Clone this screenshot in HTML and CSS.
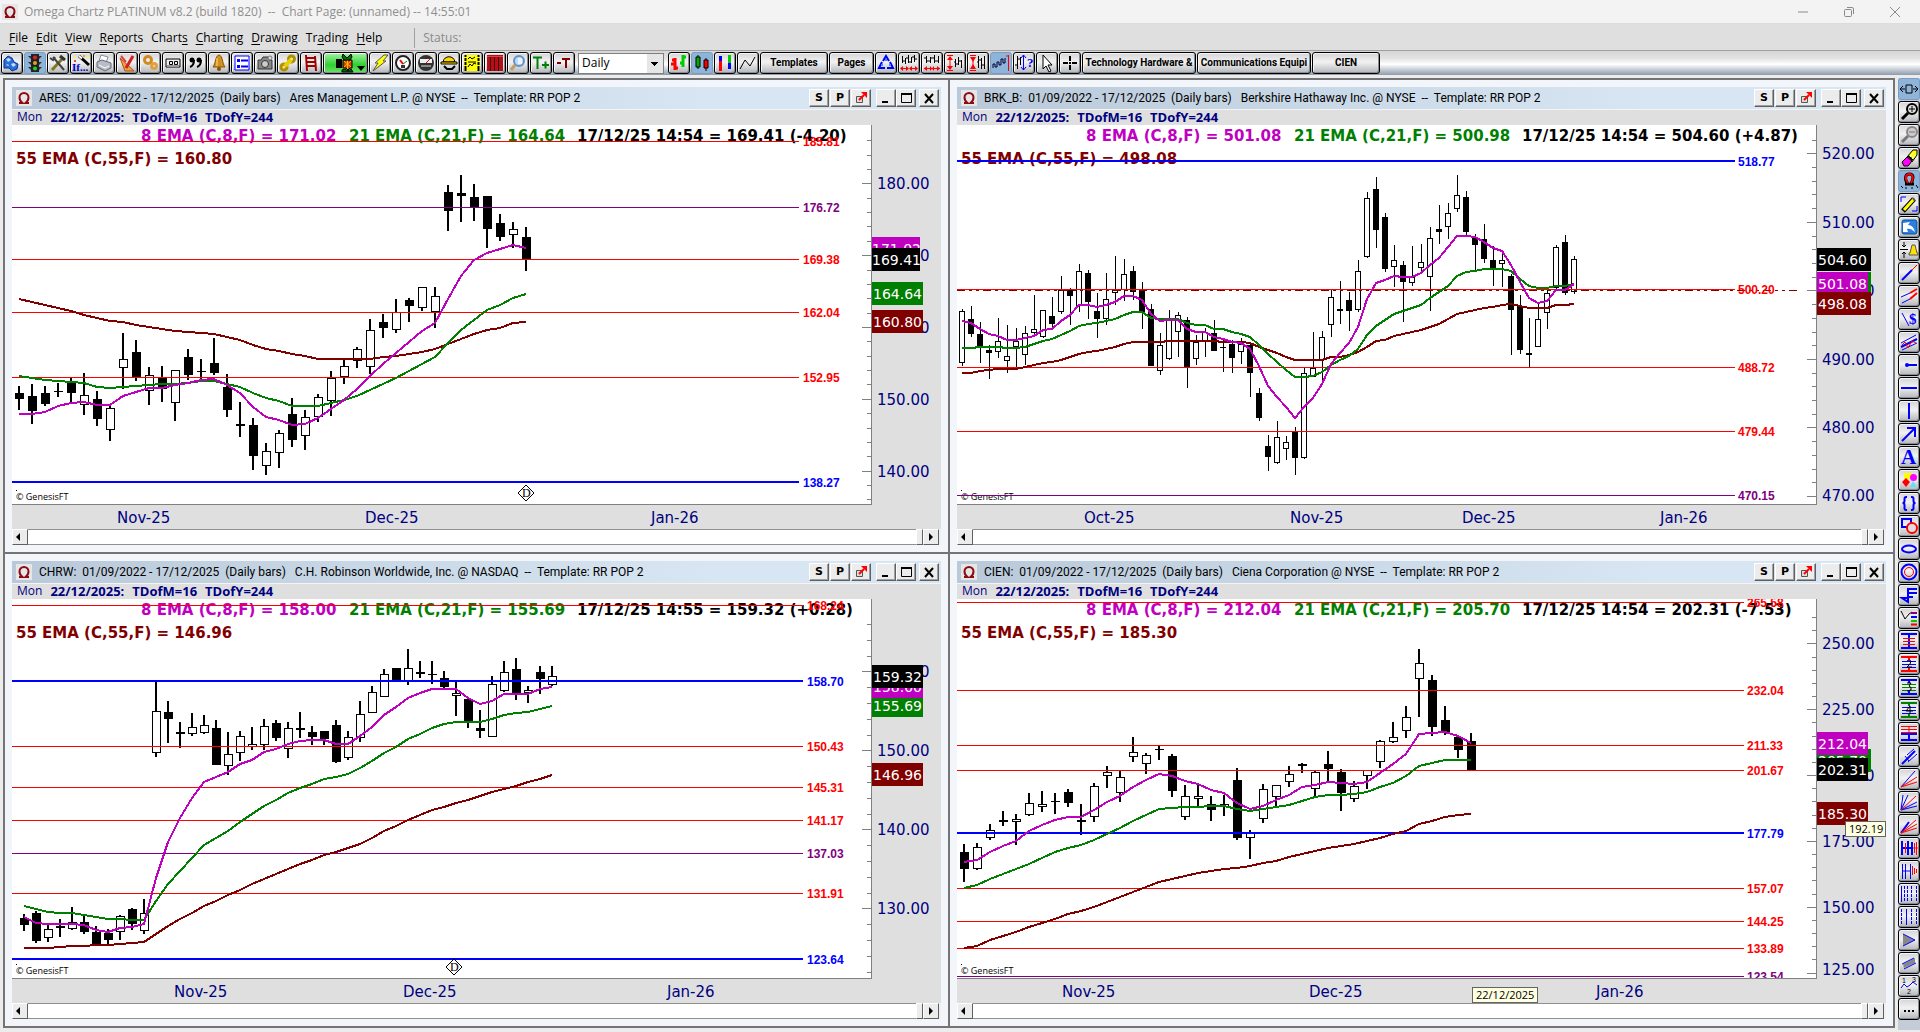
FILE: index.html
```html
<!DOCTYPE html>
<html lang="en">
<head>
<meta charset="utf-8">
<title>Omega Chartz PLATINUM</title>
<link rel="stylesheet" href="styles.css">
</head>
<body>
<header class="titlebar">
  <svg class="omega" viewBox="0 0 16 16" aria-hidden="true"><path d="M3 13h3.500C4.500 11.500 3.500 9.500 3.500 7.500a4.500 4.500 0 0 1 9 0c0 2-1 4-3 5.500H13"/></svg>
  <h1 class="app-title">Omega Chartz PLATINUM v8.2 (build 1820)&nbsp; --&nbsp; Chart Page: (unnamed) -- 14:55:01</h1>
  <div class="win-controls">
    <button type="button" aria-label="Minimize"><svg viewBox="0 0 12 12"><path d="M1 6h10"/></svg></button>
    <button type="button" aria-label="Restore"><svg viewBox="0 0 12 12"><rect x="1.500" y="3.500" width="7" height="7" rx="1"/><path d="M4 1.500h5a1.500 1.500 0 0 1 1.500 1.500v5"/></svg></button>
    <button type="button" aria-label="Close"><svg viewBox="0 0 12 12"><path d="M1 1l10 10M11 1L1 11"/></svg></button>
  </div>
</header>
<nav class="menubar">
  <a href="#"><u>F</u>ile</a><a href="#"><u>E</u>dit</a><a href="#"><u>V</u>iew</a><a href="#"><u>R</u>eports</a><a href="#">Chart<u>s</u></a><a href="#"><u>C</u>harting</a><a href="#"><u>D</u>rawing</a><a href="#">Tr<u>a</u>ding</a><a href="#"><u>H</u>elp</a>
  <span class="status">Status:</span>
</nav>
<div class="toolbar" role="toolbar" aria-label="Main">
  <div class="tools" data-tools="main"></div>
  <select class="period" aria-label="Bar period"><option>Daily</option><option>Weekly</option><option>Monthly</option></select>
  <div class="tools" data-tools="style"></div>
  <button type="button" class="tool label templates">Templates</button>
  <button type="button" class="tool label pages">Pages</button>
  <div class="tools" data-tools="scale"></div>
  <button type="button" class="tool label sector">Technology Hardware &amp;</button>
  <button type="button" class="tool label sector">Communications Equipi</button>
  <button type="button" class="tool label symbol">CIEN</button>
</div>
<div class="workspace">
  <main class="mdi">
    <section class="pane" data-chart="ares" data-title="ARES:&nbsp; 01/09/2022 - 17/12/2025&nbsp; (Daily bars)&nbsp;&nbsp; Ares Management L.P. @ NYSE&nbsp; --&nbsp; Template: RR POP 2"></section>
    <section class="pane" data-chart="brk" data-title="BRK_B:&nbsp; 01/09/2022 - 17/12/2025&nbsp; (Daily bars)&nbsp;&nbsp; Berkshire Hathaway Inc. @ NYSE&nbsp; --&nbsp; Template: RR POP 2"></section>
    <section class="pane" data-chart="chrw" data-title="CHRW:&nbsp; 01/09/2022 - 17/12/2025&nbsp; (Daily bars)&nbsp;&nbsp; C.H. Robinson Worldwide, Inc. @ NASDAQ&nbsp; --&nbsp; Template: RR POP 2"></section>
    <section class="pane" data-chart="cien" data-title="CIEN:&nbsp; 01/09/2022 - 17/12/2025&nbsp; (Daily bars)&nbsp;&nbsp; Ciena Corporation @ NYSE&nbsp; --&nbsp; Template: RR POP 2"></section>
  </main>
  <aside class="sidebar" role="toolbar" aria-label="Drawing" data-tools="draw"></aside>
</div>
<template id="window">
  <header class="win-title">
    <svg class="omega" viewBox="0 0 16 16" aria-hidden="true"><path d="M3 13h3.500C4.500 11.500 3.500 9.500 3.500 7.500a4.500 4.500 0 0 1 9 0c0 2-1 4-3 5.500H13"/></svg>
    <h2></h2>
    <div class="group">
      <button type="button">S</button><button type="button">P</button><button type="button" aria-label="Pop out"><svg viewBox="0 0 14 14"><path d="M2.500 5.500h6v6h-6z" fill="#ddd" stroke="#555"/><path d="M5 9l5-5" stroke="#f00" stroke-width="2"/><path d="M7 1h6v6z" fill="#f00"/></svg></button>
    </div>
    <div class="group pair">
      <button type="button" aria-label="Minimize"><svg viewBox="0 0 14 14"><path d="M3 11h6" stroke="#000" stroke-width="2"/></svg></button><button type="button" aria-label="Maximize"><svg viewBox="0 0 14 14"><path d="M2.500 2.500h10v9h-10z" fill="none" stroke="#000"/><path d="M2 3h11" stroke="#000" stroke-width="2"/></svg></button>
    </div>
    <button type="button" aria-label="Close"><svg viewBox="0 0 14 14"><path d="M3 3l8 9M11 3l-8 9" stroke="#000" stroke-width="2"/></svg></button>
  </header>
  <p class="info"><span>Mon</span><b>22/12/2025:</b><b>TDofM=16</b><b>TDofY=244</b></p>
  <div class="chart"></div>
  <div class="scroll">
    <button type="button" aria-label="Scroll left"><svg viewBox="0 0 14 14"><path d="M7 3v8L3 7z"/></svg></button>
    <div class="track"></div>
    <div class="thumb"></div>
    <button type="button" aria-label="Scroll right"><svg viewBox="0 0 14 14"><path d="M5 3v8l4-4z"/></svg></button>
  </div>
</template>
<script src="script.js"></script>
</body>
</html>
```
FILE: styles.css
```css
* { box-sizing: border-box; }
body {
  margin: 0;
  min-height: 100vh;
  display: flex;
  flex-direction: column;
  background: #f0f0f0;
  color: #000;
  font: 12px/16px "Segoe UI", "Open Sans", "Noto Sans", sans-serif;
}
button, select { font: inherit; color: inherit; padding: 0; margin: 0; }
h1, h2, p { margin: 0; font-size: inherit; font-weight: 400; }
svg { display: block; }

.titlebar {
  height: 24px;
  display: flex;
  align-items: center;
  padding: 0 19px 0 2px;
  background: #f3f3f3;
  border-bottom: 1px solid #dcdcdc;
}
.omega { width: 16px; height: 16px; flex: none; background: #e6e6e6; }
.omega path { fill: none; stroke: #8b0a14; stroke-width: 2; }
.app-title { flex: 1; margin-left: 6px; color: #8f8f8f; white-space: pre; }
.win-controls { display: flex; gap: 34px; }
.win-controls button { width: 12px; height: 12px; border: 0; background: none; }
.win-controls svg { width: 12px; height: 12px; fill: none; stroke: #8a8a8a; }

.menubar {
  height: 27px;
  display: flex;
  align-items: center;
  gap: 8px;
  padding: 1px 0 0 9px;
  background: #dfdfdf;
  border-bottom: 1px solid #a0a0a0;
}
.menubar a { color: #000; text-decoration: none; }
.menubar u { text-underline-offset: 2px; }
.status { margin-left: 24px; padding-left: 8px; border-left: 1px solid #a0a0a0; color: #8a8a8a; line-height: 20px; }

.toolbar {
  height: 24px;
  display: flex;
  align-items: center;
  gap: 1px;
  padding-left: 1px;
  background: linear-gradient(#d6d6d6, #e2e2e2 30%, #fff 55%, #8c9bab);
}
.tools { display: flex; gap: 1px; }
.tool {
  flex: none;
  width: 22px;
  height: 22px;
  border: 1px solid #000;
  border-radius: 3px;
  background: linear-gradient(#d4d4d8, #f2f2f2 45%, #b4b6ba);
  box-shadow: inset 1px 1px #f4f4f4, inset -1px -1px #8a8c90;
  overflow: hidden;
}
.tool svg { width: 20px; height: 20px; }
.tool.on { background: #8fb4d9; border-color: #7a9cc0; box-shadow: none; }
.tool.go { width: 45px; background: linear-gradient(#a8f0a8, #30d030 60%, #70e070); }
.tool.go svg { width: 43px; }
.label { font: bold 10px/18px Roboto, "Liberation Sans", Arial, sans-serif; white-space: nowrap; }
.templates { width: 68px; }
.pages { width: 45px; }
.sector { width: 114px; }
.symbol { width: 68px; }
.period {
  appearance: none;
  width: 86px;
  height: 21px;
  margin: 0 3px 0 2px;
  padding-left: 3px;
  border: 1px solid #808080;
  border-radius: 0;
  background:
    linear-gradient(135deg, #000 50%, transparent 50%) right 4px top 8px / 4px 4px no-repeat,
    linear-gradient(225deg, #000 50%, transparent 50%) right 8px top 8px / 4px 4px no-repeat,
    linear-gradient(#e6e6e6, #e6e6e6) right 0 top 0 / 16px 19px no-repeat,
    #fff;
}

.workspace { flex: 1; display: flex; gap: 3px; padding: 3px 0 2px 3px; background: #ececec; }
.mdi {
  flex: 1;
  min-width: 0;
  margin-bottom: 2px;
  display: grid;
  grid-template-columns: 1fr 1fr;
  grid-template-rows: 1fr 1fr;
  gap: 2px;
  border: 2px solid #747474;
  background: #747474;
}
.pane { min-width: 0; min-height: 0; display: flex; flex-direction: column; padding: 7px; background: #f2f6fb; }
.sidebar { width: 22px; display: flex; flex-direction: column; gap: 1px; background: #c4ccd8; }

.win-title {
  height: 23px;
  display: flex;
  align-items: center;
  gap: 3px;
  padding: 0 2px 0 4px;
  background: linear-gradient(90deg, #b9c9d9, #d8e6f3 75%);
  border-bottom: 1px solid #f4f4f4;
}
.win-title h2 { flex: 1; margin-left: 4px; font-family: Roboto, "Noto Sans", sans-serif; white-space: nowrap; overflow: hidden; }
.group { display: flex; gap: 1px; }
.pair { margin-left: 2px; gap: 0; }
.win-title button {
  width: 20px;
  height: 18px;
  display: flex;
  align-items: center;
  justify-content: center;
  border: 1px solid;
  border-color: #fff #606060 #606060 #fff;
  box-shadow: inset -1px -1px #a0a0a0;
  background: #ececec;
  font: bold 11px/14px "DejaVu Sans", Verdana, sans-serif;
}
.win-title button svg { width: 14px; height: 14px; }
.info { height: 15px; display: flex; gap: 8px; padding-left: 5px; background: #dfdfdf; color: #000080; line-height: 14px; }
.info b { font-size: 13px; }

.chart { flex: 1; min-height: 0; position: relative; background: #dfdfdf; overflow: hidden; }
.chart > svg { position: absolute; inset: 0; width: 100%; height: 100%; }
.chart text { white-space: pre; }
.axis { font: 15px "Comic Sans MS", "DejaVu Sans", sans-serif; fill: #000080; }
.tag { font: 14px "Comic Sans MS", "DejaVu Sans", sans-serif; fill: #fff; }
.legend { font: bold 15px "Comic Sans MS", "DejaVu Sans", sans-serif; }
.level { font: bold 12px "Liberation Sans", Arial, sans-serif; }
.credit { font: 9px "Open Sans", "Noto Sans", sans-serif; }
.tip { font: 11px "Open Sans", "Noto Sans", sans-serif; }

.scroll { height: 16px; display: flex; padding-right: 2px; background: #f0f0f0; }
.scroll button, .thumb { width: 16px; height: 16px; border: 1px solid; border-color: #fff #606060 #606060 #fff; background: #ececec; }
.scroll .thumb { width: 7px; }
.scroll svg { width: 14px; height: 14px; }
.track { flex: 1; background: #fff; border: solid #909090; border-width: 1px 0; }
```
FILE: script.js
```js
const B = '#00f', R = '#f00', K = '#000', G = '#008000', Y = '#ff0', M = '#c000c0', N = '#800000', V = '#800080';
const line = (d, c = K, w = 1) => `<path d="${d}" fill="none" stroke="${c}" stroke-width="${w}"/>`;
const fill = (d, c = K, s = 'none') => `<path d="${d}" fill="${c}" stroke="${s}"/>`;
const dot = (x, y, r, c, s = 'none', w = 1) => `<circle cx="${x}" cy="${y}" r="${r}" fill="${c}" stroke="${s}" stroke-width="${w}"/>`;
const word = (x, y, t, c, size) => `<text x="${x}" y="${y}" fill="${c}" font-family="Liberation Serif" font-weight="bold" font-size="${size}">${t}</text>`;
const bars = 'M3.500 3v7M6.500 5v6M9.500 2v8M12.500 4v6M15.500 2v7M4 8h2M7 5h2M10 9h2M13 4h2M16 6h2';

const icons = {
  cubes: fill('M2 7l4-4 4 2 2 4 4 2-1 5-5 2-3-3-5 0z', '#2a6fd6', '#0a2f9a') + fill('M4 6l3-1 2 2-3 2zM9 11l3-1 2 2-3 2zM4 12l2-1 1 2z', '#bfe0ff'),
  signal: fill('M6 1h8v18H6z', '#222') + fill('M3 3h3v3zM14 3h3l-3 3zM3 9h3v3zM14 9h3l-3 3zM3 14h3v3zM14 14h3l-3 3z', '#333') + dot(10, 4.500, 2, '#e02020') + dot(10, 10, 2, '#e0a020') + dot(10, 15.500, 2, '#20d020'),
  tools: line('M4 17L15 5', '#807820', 3) + line('M12 3l5 4', '#333', 3) + line('M5 4l11 13', '#444', 2) + line('M2 5l3 2 2-3', '#444', 2),
  wizard: line('M8 3l10 9', '#000', 3) + line('M8 3l3 2.500', '#fff', 2) + dot(4, 4, 1, Y) + dot(13, 3, 1, '#f80') + dot(4, 8, 1, R) + dot(17, 4, 1, Y) + word(1, 18, 'If...', '#00c', 11),
  print: fill('M7 2l7 2-2 6-7-2z', '#fff', '#889') + fill('M3 9l5-2 9 3v5l-6 3-8-4z', '#b8bcc8', '#667') + line('M5 12l6 3 4-2', '#fff'),
  design: fill('M3 5l14 13H8z', '#f0a040', '#b05010') + line('M16 3l-7 12', '#d02020', 3) + line('M4 3l5 6', '#e04040', 2),
  gears: dot(8, 7, 3.500, 'none', '#d08a20', 3) + dot(14, 13, 2.500, 'none', '#e0a040', 3),
  frame: fill('M3 6h14v8H3z', '#eee', K) + line('M4 13h12', '#999', 2) + line('M6.500 8.500h3v3h-3zM11.500 8.500h3v3h-3z'),
  quotes: dot(6, 7, 2.500, K) + dot(13, 7, 2.500, K) + line('M8 7c0 4-1 6-4 7M15 7c0 4-1 6-4 7', K, 2),
  bell: fill('M10 2c4 1 3 8 6 12H4c3-4 2-11 6-12z', '#d09020', '#8a5000') + dot(10, 16, 2, '#8a5000') + line('M8 5v8', '#ffe080'),
  list: fill('M3 3h14v14H3z', '#fff', B) + fill('M5 6h3v3H5zM5 12h3v3H5z', B) + line('M9 7.500h7M9 13.500h7', B, 2),
  camera: fill('M3 7h3l2-3h5l1 3h3v9H3z', '#888', '#333') + dot(10, 11, 3.500, '#ccc', '#333') + dot(15, 5, 2, '#ddd', '#777'),
  link: dot(13.500, 6, 3, 'none', '#b09000', 3) + dot(6, 14, 3, 'none', '#b09000', 3) + line('M13 7l-6 6', '#e8d000', 4) + line('M14 5l-1 1M6 14l-1 1', '#ffe820', 2),
  ladder: line('M5 2l1 16M14 3l1 15M5 5h9M5 9h10M6 13h9', '#a00000', 2),
  cracker: fill('M12 6h6v9h-6z') + fill('M19 7h9v8h-2l-2 2-2-2h-3z', '#d04000', K) + line('M20 8l7 6M27 8l-7 6M23.500 7v9', '#ffc000') + fill('M19 1l4 4 4-4 1 3-2 3h-6l-2-3zM18 17l3-1 3 2 3-2 2 3H18z', '#007000', K) + fill('M33 13h8l-4 5z'),
  bolt: fill('M14 2h4l-5 6h3L3 18l5-8H5z', Y, '#555'),
  gauge: dot(10, 10, 7, '#fff', '#222', 2) + line('M10 11l-3-4', R, 2) + line('M10 11l4-3', G) + fill('M8 12h4v3H8z', '#333'),
  meter: dot(10, 10, 8, '#333') + fill('M4 6h12v4H4z', '#eee') + line('M10 10l4-4', R) + fill('M5 12h10v2H5z', '#888'),
  hat: fill('M4 9c1-7 11-7 12 0z', '#ffd800', K) + fill('M2 9h16v2H2z', '#ffe000', K) + line('M5 13l3 3h5l3-3', K, 2),
  film: fill('M2 2h16v16H2z', Y) + line('M3.500 2v16M16.500 2v16', K, 2) + line('M2 4.500h3M2 8.500h3M2 12.500h3M15 4.500h3M15 8.500h3M15 12.500h3', Y, 1) + line('M6 9h8M6 14l2-3 2 2 2-3 2 1M6 6l2-2 2 2 3-2'),
  curtain: fill('M2 2h16v16H2z', '#b01018') + line('M5.500 4v14M9.500 4v14M13.500 4v14', '#500') + line('M2 3.500h16', '#e04040'),
  find: dot(11, 8, 5, '#b8dcff', '#6a90c0', 2) + line('M7 12l-4 5', '#c0a060', 3) + fill('M10 5h4v6h-4z', '#e8f4ff'),
  tplus: line('M2 4.500h9M6.500 4v12', G, 2) + line('M11 12h7M14.500 8.500v7', G, 2),
  tminus: line('M3 10h4', N, 2) + line('M8 6h8M12 6v9', N, 2),
  ohlc: line('M6 5v12M3 7h3M6 15h3M2 11h4', R, 3) + line('M14 2v12M11 10h3M14 4h3', '#0c0', 3),
  candle: line('M6 2v14M14 5v13') + fill('M4 4h4v10H4z', '#0a0', K) + fill('M12 7h4v8h-4z', R, K),
  hlbar: line('M5.500 8v10', R, 3) + line('M5.500 3v5', B, 3) + line('M14.500 2v8', '#0c0', 3) + line('M14.500 10v6', B, 3),
  close: line('M2 16l5-9 5 6 5-9', K, 1),
  recycle: line('M7 8l3-5 3 5M6 9l-3 6h6M14 9l3 6h-6', B, 2) + line('M5 12h2M10 6v2M13 12h2', '#48f', 2),
  squeeze: line(bars) + line('M2 15.500h6M12 15.500h6', R) + fill('M4 13v5l-3-2.500zM7 13v5l3-2.500zM13 13v5l-3-2.500zM16 13v5l3-2.500z', R),
  expand: line('M4.500 3v7M8.500 4v6M12.500 2v8M16.500 3v7M2 5h2M5 8h3M9 5h3M13 8h3') + line('M2 15.500h16', R) + fill('M5 13v5l-3-2.500zM8 13v5l2-2.500zM12 13v5l-2-2.500zM15 13v5l3-2.500z', R),
  tall: line('M2 2.500h6M2 17.500h6M5 4v12', R) + fill('M2 7h6l-3-4zM2 13h6l-3 4z', R) + line('M10.500 6v8M13.500 4v8M16.500 7v8M9 9h2M11 11h2M14 8h2'),
  short: line('M2 2.500h6M2 17.500h6M5 4v12', R) + fill('M2 4h6l-3 5zM2 16h6l-3-5z', R) + line('M10.500 3v12M13.500 5v11M16.500 3v13M9 9h2M11 7h2M14 12h2'),
  lastbar: line('M2 15v-4h2v3h2v-5h2v3h2V6h2v4h2V5', '#003') + line('M17.500 2v16M15 3h3', R),
  what: line('M3.500 3v13M3 6h3M1 12h2M6.500 4v8', K) + line('M9.500 2v15M7 5l2.500-3L12 5M7 14l2.500 3 2.500-3', B) + word(13, 14, '?', B, 13),
  pointer: fill('M6 2v14l3-3 3 6 2-1-3-6h4z', '#fff', K),
  cross: line('M10 3v5M10 12v5M3 10h5M12 10h5', K, 2) + fill('M9 9h2v2H9z'),
  spread: fill('M7 6h6v8H7z', 'none', K) + line('M1 10h5M14 10h5M4 7l-3 3 3 3M16 7l3 3-3 3'),
  zoomin: dot(13, 7, 5, '#ddd', K, 2) + line('M10 7h6M13 4v6') + line('M9 11l-6 6', K, 3),
  zoomout: dot(13, 7, 5, '#ccc', '#888', 2) + line('M10 7h6', '#777') + line('M9 11l-6 6', '#777', 3),
  eraser: fill('M8 9l6-7h4v5l-5 7z', Y, K) + fill('M3 14l5-5 5 4-4 5H5z', '#f0f', K) + line('M9 8l5 4', K, 2) + line('M14 5l-3 4M16 7l-3 4', '#fff'),
  magnet: line('M6 13h3c-4-5-3-10 1.500-10S15 8 11.500 13H15', K, 3) + line('M9 12c-4-5-2-9 1.500-9S15 8 12 12', R, 2) + line('M2 15l2 2M7 16v2M13 16v2M17 14l2 3', K),
  pencil: line('M4 17L15 5', K, 5) + line('M5 16L15 5', Y, 3) + line('M2 8V3h5M18 12v5h-5', B) + line('M14 4l2 3', '#555', 2),
  undo: '<rect x="3" y="3" width="15" height="14" rx="2" fill="#2a7fe0" stroke="#0a50a0"/>' + fill('M4 6l7-1-2 3c4 0 6 3 7 7-3-3-6-4-8-3l1 3-5 0z', '#fff'),
  alarm: line('M5 2v5M3 5l2 2 2-2M1 9.500h8M5 18v-6M3 14l2-2 2 2') + fill('M13 5h3l2 8h1v2h-9v-2h1z', '#ffe000', '#555'),
  trend: line('M3 17L13 7', B, 2) + line('M13 7l5-5', R),
  parallel: line('M2 11L11 7M3 17l8-4', B) + line('M11 7l7-4M11 13l7-6', R, 2),
  dollar: line('M3 4l7 13', B) + word(10, 15, '$', B, 15),
  regress: line('M2 11L17 3M3 18l15-7', B) + line('M2 15l16-8', B, 2) + line('M3 13l3-3 3 6 4-7 4 2', R),
  ray: line('M8 10h10', B, 2) + dot(8, 10, 2, B),
  hline: line('M2 10h16', B, 2),
  vline: line('M10 2v16', B, 2),
  arrow: line('M3 17L15 5', B, 2) + line('M8 4h8v9', B, 2),
  text: word(2, 17, 'A', B, 21),
  shapes: fill('M5 3h8v6H5z', Y) + dot(14.500, 7.500, 3.500, '#f0f') + fill('M7 8l4 4-4 5-4-5z', R) + fill('M14 11l4 6h-7z', '#60e0ff'),
  brace: line('M8 4H7q-1.500 0-1.500 2v2q0 2-2 2q2 0 2 2v3q0 2 1.500 2h1M12 4h1q1.500 0 1.500 2v2q0 2 2 2q-2 0-2 2v3q0 2-1.500 2h-1', B, 2),
  overlay: line('M3 3h9v8H3z', B, 2) + dot(13, 12, 5, '#ddd', R, 2),
  ellipse: '<ellipse cx="10" cy="10" rx="7" ry="3.500" fill="none" stroke="#00f" stroke-width="2"/>',
  rings: dot(10, 10, 7.500, 'none', B, 2) + dot(10, 10, 4.500, 'none', R),
  flag: line('M9 3v14L3 13h6M9 4h9M9 8h9M9 12h5', B, 2),
  profile: line('M2 3l4 8 4-5 3-2') + line('M12 5h6', V, 2) + line('M12 9h6', B, 2) + line('M12 13h6', '#0c0', 2) + line('M12 16.500h6', R, 2),
  retrace: line('M2 3h16M2 17h16M10 3v14', B, 2) + line('M4 7.500h12M4 10.500h12M4 13.500h12', R),
  retrace2: line('M2 3h16M2 17h16M10 3v3M10 14v3', R, 2) + line('M3 7.500h14M3 10.500h14M3 13.500h14', B) + line('M8 7q2-2 4 0q0 3-4 6h5'),
  retrace3: line('M2 3h16M2 17h16M10 3v3M10 14v3', B, 2) + line('M3 7.500h14M3 10.500h14M3 13.500h14', G) + line('M8 6h4l-2 3q3 1 2 4l-4 1'),
  retrace4: line('M2 3h16M2 17h16M10 3v3M10 14v3', G, 2) + line('M3 7.500h14M3 10.500h14M3 13.500h14', B) + line('M11 14V6l-4 5h7'),
  extend: line('M2 3.500h16M2 6.500h16M2 9.500h16M10 3v7', R, 1) + line('M2 11h16M2 17h16M10 11v6', B, 2),
  fork: line('M8 9l7-6M9 16l9-8M6 10l4 5', B, 1) + line('M3 18L16 5', B, 2),
  fan1: line('M2 18L16 2', B) + line('M2 18L18 8M2 18l16-5', R),
  fan2: line('M2 18L4 3M2 18L9 3M2 18l16-8M2 18l16-4', B) + line('M2 18L17 4', R),
  fan3: line('M2 18L10 7', B, 2) + line('M2 18L17 5M2 18l16-9M2 18l16-5', R),
  cycle1: line('M3 3v14M9 3v14M2 10h11M13 4v13', B, 2) + line('M6.500 5v10M15.500 5v10M17.500 4v13M14 10h5', R),
  cycle2: line('M3.500 3v15M6.500 3v15M11.500 3v15M4 10h8', B) + line('M13.500 5v9M15.500 7v6M17.500 8v4', R),
  cycle3: line('M2.500 2v16', B) + '<path d="M5.500 2v16M8.500 2v16M12.500 2v16M17.500 2v16" stroke="#00f" stroke-dasharray="3 1"/>',
  cycle4: '<path d="M2.500 2v16M12.500 2v16M17.500 2v16" stroke="#00f" stroke-dasharray="3 1"/>' + line('M7.500 2v16', B),
  wedge: fill('M4 4l12 6-12 6z', '#888') + line('M4 4l12 6-12 6', B),
  band: fill('M4 11l12-6v5L5 15z', '#888') + line('M3 11l12-6M5 16l12-6', B),
  waves: line('M2 12l3-4 3 3 3-2 3-3 4 3', B) + '<g font-family="Liberation Sans" font-size="7"><text x="3" y="7">1</text><text x="8" y="18">2</text><text x="13" y="6">3</text></g>',
  more: fill('M5 11h2v2H5zM9 11h2v2H9zM13 11h2v2h-2z'),
};

const sets = {
  main: 'cubes signal* tools wizard print design gears frame quotes bell list camera link ladder cracker! bolt gauge meter hat film curtain find tplus tminus',
  style: 'ohlc candle* hlbar close',
  scale: 'recycle squeeze expand tall short lastbar* what pointer cross',
  draw: 'spread* zoomin zoomout eraser magnet* pencil undo alarm trend parallel dollar regress ray hline vline arrow text shapes brace overlay ellipse rings flag profile retrace retrace2 retrace3 retrace4 extend fork fan1 fan2 fan3 cycle1 cycle2 cycle3 cycle4 wedge band waves more',
};

document.querySelectorAll('[data-tools]').forEach(box => {
  box.innerHTML = sets[box.dataset.tools].split(' ').map(item => {
    const name = item.replace(/[*!]/, '');
    const cls = item.endsWith('*') ? ' on' : item.endsWith('!') ? ' go' : '';
    const w = cls === ' go' ? 43 : 20;
    return `<button type="button" class="tool${cls}" aria-label="${name}"><svg viewBox="0 0 ${w} 20">${icons[name]}</svg></button>`;
  }).join('');
});

// Vertical positions are stored in thirds of a pixel from each chart's own origin (yo).
// Candle: high, body top, body bottom, low; a trailing "f" marks a down (filled) bar.
const charts = {
  ares: {
    x0: 7, step: 13, body: 9, wick: 2, yo: 75, end: 787, label: 791,
    candles: '708 729 746 779f|702 738 782 822f|709 729 762 768f|698 723 727 741f|683 694 729 760f|669 736 764 795|723 747 806 828f|765 775 841 873|549 628 653 717|570 606 682 693f|651 676 724 765|648 683 718 756f|660 660 758 813|597 621 674 689f|627 662 665 691f|564 639 668 675f|672 711 779 801f|756 823 827 861f|804 825 917 960f|879 904 949 975|840 850 908 954|744 792 869 891f|780 802 857 900|732 742 800 816|663 685 754 798|630 649 680 702|591 598 634 654|507 541 650 671|492 516 533 564f|447 487 539 549|444 450 467 516f|411 411 475 483|411 439 485 534|105 126 182 243f|75 129 137 216f|102 141 172 213f|138 138 236 294f|192 219 260 273f|216 238 255 294|231 261 327 363f',
    ema: [
      [N, '446 457 466 475 484 494 505 514 517 524 530 536 542 547 549 553 562 571 584 596 604 613 619 626 627 627 627 626 620 617 611 605 598 583 566 552 541 533 520 515'],
      [G, '678 684 691 694 697 700 710 714 710 707 704 703 701 698 692 692 701 712 728 744 754 767 767 767 760 749 737 719 701 683 663 642 622 580 541 510 481 464 443 431'],
      [M, '792 791 785 769 760 756 765 765 738 725 714 714 704 698 689 686 704 730 771 802 810 824 822 804 777 750 717 677 643 610 577 543 518 446 377 330 308 298 284 293']],
    levels: [[-26, R, '185.81'], [172, V, '176.72'], [328, R, '169.38'], [487, R, '162.04'], [682, R, '152.95'], [996, B, '138.27']],
    axis: { top: 180, y: 100, dv: 10, dy: 215.5, n: 5 },
    tags: [[396, G, '164.64', 51], [261, M, '171.02', 48], [480, N, '160.80', 51], [294, K, '169.41', 48]],
    months: [[105, 'Nov-25'], [353, 'Dec-25'], [639, 'Jan-26']],
    legend: ['171.02', '164.64', '17/12/25 14:54 = 169.41 (-4.20)', '160.80'], mark: [514, 1030],
  },
  brk: {
    x0: 5, step: 9, body: 6, wick: 1, yo: 15, end: 778, label: 781,
    candles: '537 544 700 707|528 568 611 621f|576 612 655 699f|645 660 668 747f|564 634 667 684|585 679 694 729|594 632 650 716|588 610 676 705|495 598 609 612|541 541 620 623|501 558 581 590f|438 480 545 551|474 480 497 585f|402 424 529 545|420 429 517 567f|489 543 566 624f|429 508 566 585|378 481 490 524|387 433 479 513|408 423 485 510f|456 479 547 597f|522 537 707 707f|609 646 724 735|540 570 688 690|546 556 607 681|561 570 711 774f|615 637 688 705|594 605 637 681|570 609 662 662f|627 651 653 726f|630 643 683 729f|624 643 667 702|640 645 728 801f|774 789 863 873f|915 948 980 1023f|873 922 1000 1002|918 937 958 990|891 905 983 1035f|715 730 985 988|606 714 742 742|603 622 689 756|481 502 586 621|453 538 542 582f|486 510 542 603f|390 424 541 546|186 205 382 384|141 177 299 354f|249 261 416 426f|345 391 412 471|393 405 455 576f|348 440 458 468|342 397 415 423|291 325 442 543|225 297 305 342f|219 250 292 327|135 196 238 246|183 201 305 318f|312 320 345 420f|282 327 386 399f|348 390 416 468f|366 391 403 471|432 438 539 675f|495 528 659 671f|564 670 675 713f|519 568 650 652|480 490 550 598|345 352 475 478|315 336 488 495f|378 388 485 492',
    ema: [
      [N, '730 728 723 721 718 717 716 712 706 700 697 689 682 673 666 664 658 652 643 637 636 636 635 633 632 632 632 632 633 635 636 637 639 650 661 670 680 690 690 690 689 682 680 674 665 650 634 629 619 613 607 599 591 582 568 553 545 539 534 530 526 521 528 534 534 534 526 524 521'],
      [G, '654 653 651 651 652 655 655 650 642 634 628 616 603 589 583 580 573 567 554 547 546 563 567 567 567 580 585 586 596 598 607 611 621 645 672 697 719 741 740 738 726 706 690 678 657 614 587 570 552 543 535 524 505 486 467 438 427 422 418 416 416 424 447 468 475 475 467 467 461'],
      [M, '573 580 597 613 617 630 630 625 619 601 598 572 555 525 524 531 526 516 499 498 509 552 572 571 570 598 606 607 620 627 636 640 657 708 768 802 832 864 832 805 762 703 668 638 590 508 460 450 437 440 440 430 405 384 352 318 318 320 337 354 363 405 455 505 519 514 480 479 461']],
    levels: [[92, B, '518.77'], [478, R, '500.20'], [712, R, '488.72'], [904, R, '479.44'], [1096, V, '470.15']],
    dash: 481,
    axis: { top: 520, y: 70, dv: 10, dy: 205.6, n: 6 },
    tags: [[427, G, '500.98', 54], [427, M, '501.08', 51], [486, N, '498.08', 54], [354, K, '504.60', 54]],
    months: [[127, 'Oct-25'], [333, 'Nov-25'], [505, 'Dec-25'], [703, 'Jan-26']],
    legend: ['501.08', '500.98', '17/12/25 14:54 = 504.60 (+4.87)', '498.08'],
  },
  chrw: {
    x0: 12, step: 12, body: 9, wick: 2, yo: -132, end: 791, label: 795,
    candles: '1077 1089 1109 1128f|1068 1075 1157 1163f|1109 1123 1150 1160|1092 1113 1118 1145f|1056 1102 1121 1125|1082 1101 1130 1136f|1113 1131 1167 1167f|1122 1134 1155 1167f|1080 1084 1132 1155|1059 1062 1106 1125f|1032 1075 1127 1137|381 469 595 606|438 471 491 564f|501 532 536 579f|474 517 538 543|480 511 533 537|495 519 629 629f|531 598 634 660|528 544 595 618|516 568 577 585|492 514 569 585|495 504 548 558f|501 520 583 609|471 520 524 550f|513 531 545 570f|528 528 553 570f|495 510 620 624f|528 547 610 615|438 478 550 561|393 412 475 475|342 358 427 427|339 339 375 378f|282 340 382 390|318 352 358 369f|318 357 361 387f|348 369 396 400f|378 415 424 483|430 432 505 519f|465 519 527 549f|363 388 547 547|318 352 409 411|309 342 414 435f|393 406 415 444|333 351 371 417f|333 364 391 393',
    ema: [
      [N, '1180 1180 1178 1176 1174 1172 1171 1170 1168 1165 1162 1138 1114 1093 1073 1054 1039 1021 1006 988 973 958 943 928 914 901 890 878 866 848 829 814 796 781 766 755 743 734 723 712 701 692 680 671 659'],
      [G, '1054 1062 1070 1073 1075 1081 1087 1092 1093 1095 1095 1038 988 947 908 871 848 827 800 777 754 736 715 700 686 673 667 658 640 619 595 577 553 538 520 508 500 500 501 493 481 475 470 461 453'],
      [M, '1086 1103 1106 1107 1107 1110 1126 1132 1120 1117 1108 970 860 788 728 680 666 652 628 615 592 583 568 559 554 554 567 567 544 515 480 456 430 415 402 402 402 428 448 437 416 416 416 403 395']],
    levels: [[151, R, '168.24'], [378, B, '158.70'], [574, R, '150.43'], [697, R, '145.31'], [796, R, '141.17'], [895, V, '137.03'], [1015, R, '131.91'], [1212, B, '123.64']],
    axis: { top: 160, y: 349, dv: 10, dy: 237, n: 4 },
    tags: [[417, G, '155.69', 51], [361, M, '158.00', 51], [624, N, '146.96', 51], [330, K, '159.32', 51]],
    months: [[162, 'Nov-25'], [391, 'Dec-25'], [655, 'Jan-26']],
    legend: ['158.00', '155.69', '17/12/25 14:55 = 159.32 (+0.28)', '146.96'], mark: [442, 1237],
  },
  cien: {
    x0: 7, step: 13, body: 9, wick: 2, yo: -132, end: 787, label: 790,
    candles: '867 891 941 981f|864 877 941 945|807 826 850 855|768 795 800 813f|777 793 799 870|714 745 781 783|708 748 754 771|714 738 742 777f|702 711 743 756f|747 795 800 840f|684 694 787 801|633 650 664 699|648 667 715 741|546 592 607 621|594 601 626 657|573 582 586 615f|597 603 707 726f|690 724 787 795|687 724 733 756|723 747 764 798f|720 748 754 783|639 675 848 855f|825 834 850 912|687 703 793 804|691 691 727 756|633 658 682 696|624 627 632 655f|648 652 703 723|588 627 641 681f|642 651 713 768f|678 694 733 741|646 646 664 702|555 559 622 639|501 547 560 564|453 487 529 549|282 325 373 486|360 375 515 543f|453 495 533 540f|540 545 584 609f|534 558 646 646f',
    ema: [
      [N, '1180 1172 1156 1144 1132 1115 1104 1092 1077 1068 1056 1041 1027 1012 997 982 973 964 955 949 943 938 934 925 919 907 898 889 880 874 868 859 850 838 827 808 799 787 781 776'],
      [G, '998 989 973 958 943 926 909 891 880 871 855 836 820 799 781 763 760 757 755 753 754 763 768 763 757 749 737 727 720 719 718 712 697 683 664 634 625 615 615 615'],
      [M, '920 914 892 872 857 829 811 796 786 786 766 740 724 697 674 656 663 679 688 706 714 744 762 752 736 719 697 689 680 685 687 681 655 628 598 538 534 530 543 565']],
    levels: [[142, R, '265.58'], [406, R, '232.04'], [571, R, '211.33'], [646, R, '201.67'], [833, B, '177.79'], [1000, R, '157.07'], [1099, R, '144.25'], [1180, R, '133.89'], [1264, V, '123.54']],
    axis: { top: 250, y: 265, dv: 25, dy: 197.5, n: 6 },
    tags: [[583, G, '205.70', 54], [531, M, '212.04', 51], [741, N, '185.30', 51], [609, K, '202.31', 51]],
    months: [[105, 'Nov-25'], [352, 'Dec-25'], [639, 'Jan-26']],
    legend: ['212.04', '205.70', '17/12/25 14:54 = 202.31 (-7.53)', '185.30'],
    tips: [[888, 222, 41, '192.19'], [515, 388, 66, '22/12/2025']],
  },
};

const AXIS_W = 69, DATES_H = 25, BASE_W = 860, BASE_H = 379;

function draw(box, c) {
  const W = box.clientWidth - AXIS_W, H = box.clientHeight - DATES_H;
  const sx = W / BASE_W, sy = H / BASE_H;
  const X = v => Math.round(v * sx);
  const Y3 = v => Math.round((Number(v) + c.yo) / 3 * sy);
  const text = (x, y, t, cls, color) => `<text x="${x}" y="${y}" class="${cls}"${color ? ` fill="${color}"` : ''}>${t}</text>`;
  const rect = (x, y, w, h, f, s) => s ? `<rect x="${x + .5}" y="${y + .5}" width="${w - 1}" height="${Math.max(h - 1, 0)}" fill="${f}" stroke="${s}"/>` : `<rect x="${x}" y="${y}" width="${w}" height="${h}" fill="${f}"/>`;
  let p = rect(0, 0, W, H, '#fff');
  p += text(X(129), 16, `8 EMA (C,8,F) = ${c.legend[0]}`, 'legend', M);
  p += text(X(337), 16, `21 EMA (C,21,F) = ${c.legend[1]}`, 'legend', G);
  p += text(X(565), 16, c.legend[2], 'legend', K);
  p += text(4, 39, `55 EMA (C,55,F) = ${c.legend[3]}`, 'legend', N);
  p += rect(4, H - 14, 1, 1, K) + text(4, H - 4, '© GenesisFT', 'credit');
  c.candles.split('|').forEach((s, i) => {
    const down = s.endsWith('f'), [h, t, b, l] = s.replace('f', '').split(' ').map(Y3);
    const x = X(c.x0 + i * c.step);
    p += rect(x - (c.wick > 1 ? 1 : 0), h, c.wick, Math.max(l - h, 1), K);
    p += rect(x - Math.floor(c.body / 2), t, c.body, Math.max(b - t, down ? 1 : 3), down ? K : '#fff', down ? '' : K);
  });
  if (c.dash) p += `<path d="M0 ${Y3(c.dash) + .5}H${X(843)}" stroke="${N}" stroke-dasharray="8 4 3 4 3 4"/>`;
  c.levels.forEach(([y, color, t]) => {
    const w = color === B ? 2 : 1;
    p += rect(0, Y3(y) - (w > 1 ? 1 : 0), X(c.end), w, color) + text(X(c.label), Y3(y) + 5, t, 'level', color);
  });
  c.ema.forEach(([color, ys]) => {
    const pts = ys.split(' ').map((y, i) => `${X(c.x0 + i * c.step)},${Y3(y)}`).join(' ');
    p += `<polyline points="${pts}" fill="none" stroke="${color}" stroke-width="2"/>`;
  });
  if (c.mark) {
    const x = X(c.mark[0]), y = Y3(c.mark[1]);
    p += `<path d="M${x} ${y - 8}l8 8-8 8-8-8z" fill="#fff" stroke="#000"/>` + `<text x="${x - 4}" y="${y + 4}" font-family="Liberation Serif" font-size="12">D</text>`;
  }
  let out = `<svg width="${W}" height="${H}" overflow="hidden">${p}</svg>`;
  out += rect(W - 1, 0, 1, H, '#808080') + rect(0, H, W, 1, '#808080');
  const { top, y, dv, dy, n } = c.axis;
  for (let i = -10; i < n * 5 + 5; i++) {
    const ty = Y3(y + i * dy / 5), major = i % 5 === 0 && i >= 0 && i < n * 5;
    if (ty < 12 || ty > H - 2) continue;
    out += rect(W - (major ? 10 : 5), ty, major ? 10 : 5, 1, '#808080');
    if (major) out += text(W + 5, Math.min(ty + 6, H - 3), (top - i / 5 * dv).toFixed(2), 'axis');
  }
  c.tags.forEach(([ty, color, t, w]) => {
    out += rect(W, Y3(ty), w, 23, color) + text(W + (w > 48 ? 1 : 0), Y3(ty) + 17, t, 'tag');
  });
  c.months.forEach(([x, t]) => { out += text(X(x), H + 19, t, 'axis'); });
  (c.tips || []).forEach(([x, ty, w, t]) => {
    const tx = x > BASE_W ? W + x - BASE_W : X(x), top = Math.round(ty * sy);
    out += rect(tx, top, w, 16, '#ffffe1', '#646464') + text(tx + 4, top + 12, t, 'tip');
  });
  box.innerHTML = `<svg shape-rendering="crispEdges" role="img" aria-label="Price chart">${out}</svg>`;
}

const panes = [...document.querySelectorAll('.pane')];
panes.forEach(pane => {
  pane.append(document.getElementById('window').content.cloneNode(true));
  pane.querySelector('h2').textContent = pane.dataset.title;
});
const redraw = () => panes.forEach(p => draw(p.querySelector('.chart'), charts[p.dataset.chart]));
redraw();
addEventListener('resize', redraw);
```
